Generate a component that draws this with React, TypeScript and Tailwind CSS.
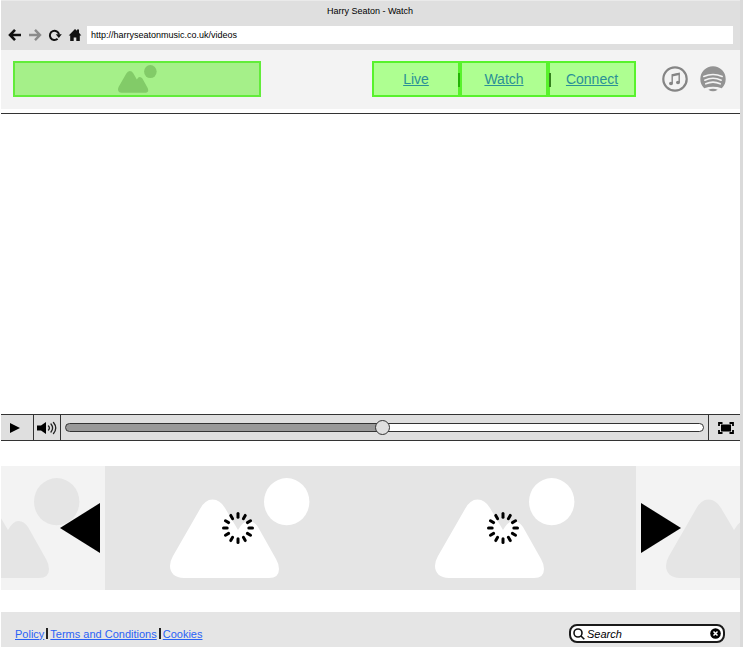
import { useState } from "react";

const navItems = ["Live", "Watch", "Connect"];
const footerItems = ["Policy", "Terms and Conditions", "Cookies"];
const spokes = [0, 30, 60, 90, 120, 150, 180, 210, 240, 270, 300, 330];

/* Placeholder artwork: two peaks and a sun */
function Picture({ className }: { className: string }) {
  return (
    <svg viewBox="0 0 143 101" className={`shrink-0 ${className}`} fill="currentColor" aria-hidden="true">
      <path d="M17 100C8 100 3 95 3 88Q3 83 6 78L33 31Q38 21.500 45.500 21.500Q53 21.500 58 30L71 52Q76 43 81.500 43Q87 43 91 49L109 81Q112 86 112 91Q112 100 102 100Z" />
      <ellipse cx="119.700" cy="23.700" rx="22.700" ry="23.600" />
    </svg>
  );
}

function Spinner() {
  return (
    <svg viewBox="-17 -17 34 34" className="absolute top-1/2 left-1/2 size-[34px] -translate-x-1/2 -translate-y-1/2" role="img" aria-label="Loading">
      {spokes.map((a) => (
        <path key={a} d="M0-10.800V-14.500" transform={`rotate(${a})`} stroke="#000" strokeWidth="3" strokeLinecap="round" />
      ))}
    </svg>
  );
}

function BrowserBar() {
  return (
    <div className="border-t border-[#eaeaea] bg-[#dfdfdf] pr-[7px] pb-1.5 pl-1.5">
      <h1 className="pt-1 text-center text-[9px] leading-3 text-black">Harry Seaton - Watch</h1>
      <div className="mt-[9px] flex items-center">
        <div className="flex w-20 items-center gap-1.5 pl-px">
          <button aria-label="Back">
            <svg viewBox="0 0 14 14" className="size-3.5" fill="none" stroke="#111" strokeWidth="2.600">
              <path d="M7 1.800L2 7l5 5.200M2 7h11" />
            </svg>
          </button>
          <button aria-label="Forward">
            <svg viewBox="0 0 14 14" className="size-3.5" fill="none" stroke="#8b8b8b" strokeWidth="2.400">
              <path d="M7 1.800l5 5.200-5 5.200M12 7H1" />
            </svg>
          </button>
          <button aria-label="Reload">
            <svg viewBox="0 0 14 14" className="size-3.5" fill="none" stroke="#111" strokeWidth="2">
              <path d="M9.600 10.800A4.600 4.600 0 1 1 11 6.500" />
              <path d="M7.800 6.300h6l-3 3.800z" fill="#111" stroke="none" />
            </svg>
          </button>
          <button aria-label="Home">
            <svg viewBox="0 0 14 14" className="size-3.5" fill="#111">
              <path d="M7 1l2 1.800V1.500h2v3.200L13.300 7.500H11.800v5.500H8.300V9.500H5.700V13H2.200V7.500H.700z" />
            </svg>
          </button>
        </div>
        <input
          aria-label="Address"
          defaultValue="http://harryseatonmusic.co.uk/videos"
          className="h-[18px] min-w-0 flex-1 bg-white px-1 text-[9px] leading-3 text-black"
        />
      </div>
    </div>
  );
}

function SiteHeader() {
  return (
    <header className="flex items-center bg-[#f3f3f3] pt-[11px] pr-[14px] pb-3 pl-3">
      <a href="#home" aria-label="Home page" className="flex h-9 w-[248px] items-center justify-center border-2 border-[#62ec3a] bg-[#a5f089]">
        <Picture className="h-7 w-10 text-[#82cb68]" />
      </a>
      <nav className="ml-auto flex">
        {navItems.map((item, i) => (
          <div key={item} className="relative flex h-9 w-[88px] items-center justify-center border-2 border-[#58f22c] bg-[#aeff91]">
            <a href={`#${item}`} className="text-[14px] leading-5 text-[#2b9096] underline">{item}</a>
            {i === 0 && <span className="absolute top-2.5 -right-0.5 h-3.5 w-0.5 bg-[#23b406]" />}
            {i === 2 && <span className="absolute top-2.5 -left-px h-3.5 w-0.5 bg-[#34801f]" />}
          </div>
        ))}
      </nav>
      <a href="#itunes" aria-label="iTunes" className="ml-[26px]">
        <svg viewBox="0 0 26 26" className="size-[26px]" fill="none" stroke="#858585">
          <circle cx="13" cy="13" r="11.700" strokeWidth="2.200" />
          <path d="M10.200 17.300V8.800l7-1.500v9" strokeWidth="1.400" />
          <path d="M10.200 9.400l7-1.500" strokeWidth="2" />
          <ellipse cx="9" cy="17.500" rx="2" ry="1.700" fill="#858585" stroke="none" />
          <ellipse cx="16" cy="16.500" rx="2" ry="1.700" fill="#858585" stroke="none" />
        </svg>
      </a>
      <a href="#spotify" aria-label="Spotify" className="ml-3">
        <svg viewBox="0 0 26 26" className="size-[26px]">
          <path d="M4.200 22.200A12.700 12.700 0 1 1 21.800 22.200Q13 19.300 4.200 22.200Z" fill="#939393" />
          <path d="M8.300 23.800Q13 21.600 17.700 23.800Q13 26.800 8.300 23.800Z" fill="#939393" />
          <path d="M3.800 10.500Q13 6.500 22.200 10.500M4.800 14.200Q13 10.400 21.200 14.200M5.800 17.800Q13 14.400 20.200 17.800" fill="none" stroke="#f3f3f3" strokeWidth="1.600" strokeLinecap="round" />
        </svg>
      </a>
    </header>
  );
}

function Player() {
  const [position, setPosition] = useState(49.7);
  return (
    <div className="flex h-[27px] items-stretch border-y border-[#333] bg-[#dfdfdf]">
      <button aria-label="Play" className="flex w-[33px] items-center justify-center border-r border-[#333] pr-1">
        <svg viewBox="0 0 10 10" className="size-2.5"><path d="M0 0L10 5L0 10z" /></svg>
      </button>
      <button aria-label="Volume" className="flex w-[27px] items-center justify-center border-r border-[#333]">
        <svg viewBox="0 0 20 14" className="h-3.5 w-5" fill="none" stroke="#222" strokeWidth="1.300" strokeLinecap="round">
          <path d="M0 4.500h4L9 1v12L4 9.500H0z" fill="#000" stroke="none" />
          <path d="M11.500 5Q13.300 7 11.500 9M14 3Q17.200 7 14 11M16.500 1.500Q21 7 16.500 12.500" />
        </svg>
      </button>
      <div className="flex flex-1 items-center px-1">
        <input
          type="range"
          aria-label="Seek"
          min="0"
          max="100"
          step="0.1"
          value={position}
          onChange={(e) => setPosition(Number(e.target.value))}
          className="h-[15px] w-full appearance-none bg-transparent [&::-webkit-slider-runnable-track]:h-[9px] [&::-webkit-slider-runnable-track]:rounded-full [&::-webkit-slider-runnable-track]:border [&::-webkit-slider-runnable-track]:border-[#333] [&::-webkit-slider-runnable-track]:bg-[linear-gradient(to_right,#999_var(--played),#fff_var(--played))] [&::-webkit-slider-thumb]:-mt-1 [&::-webkit-slider-thumb]:size-[15px] [&::-webkit-slider-thumb]:appearance-none [&::-webkit-slider-thumb]:rounded-full [&::-webkit-slider-thumb]:border [&::-webkit-slider-thumb]:border-[#333] [&::-webkit-slider-thumb]:bg-[#dfdfdf]"
          style={{ "--played": `${position}%` } as React.CSSProperties}
        />
      </div>
      <button aria-label="Full screen" className="flex w-8 items-center justify-center border-l border-[#333] pl-0.5">
        <svg viewBox="0 0 16 12" className="h-3 w-4">
          <rect x="3" y="2.500" width="10" height="7" />
          <path d="M1 4V1H4.500M11.500 1H15V4M15 8v3H11.500M4.500 11H1V8" fill="none" stroke="#000" strokeWidth="1.800" />
        </svg>
      </button>
    </div>
  );
}

function Carousel() {
  return (
    <section aria-label="Videos" className="mt-[25px] mb-[22px] flex h-[124px]">
      <div className="relative flex w-[104px] items-center justify-end overflow-hidden bg-[#f3f3f3] pr-[25px]">
        <Picture className="h-[101px] w-[143px] text-[#e5e5e5]" />
        <button aria-label="Previous" className="absolute top-1/2 right-[5px] -translate-y-1/2">
          <svg viewBox="0 0 40 50" className="h-[50px] w-10"><path d="M40 0V50L0 25z" /></svg>
        </button>
      </div>
      {["first", "second"].map((slot) => (
        <div key={slot} className="relative flex flex-1 items-center justify-center overflow-hidden bg-[#e5e5e5] pl-px">
          <Picture className="h-[101px] w-[143px] text-white" />
          <Spinner />
        </div>
      ))}
      <div className="relative flex w-[104px] items-center overflow-hidden bg-[#f3f3f3] pl-[27px]">
        <Picture className="h-[101px] w-[143px] text-[#e5e5e5]" />
        <button aria-label="Next" className="absolute top-1/2 left-[5px] -translate-y-1/2">
          <svg viewBox="0 0 40 50" className="h-[50px] w-10"><path d="M0 0V50L40 25z" /></svg>
        </button>
      </div>
    </section>
  );
}

function Footer() {
  return (
    <footer className="flex h-[35px] items-center justify-between bg-[#e5e5e5] pt-2 pr-[15px] pl-[14px]">
      <nav className="flex items-center gap-0.5 text-[11px] leading-4">
        {footerItems.map((item, i) => (
          <div key={item} className="flex items-center gap-0.5">
            {i > 0 && <span className="h-[11px] w-0.5 bg-[#222]" />}
            <a href={`#${item}`} className="text-[#2a62f5] underline">{item}</a>
          </div>
        ))}
      </nav>
      <label className="flex h-[19px] w-[156px] items-center rounded-lg border-2 border-[#1a1a1a] bg-white px-0.5">
        <svg viewBox="0 0 12 12" className="size-3 shrink-0" fill="none" stroke="#111" strokeWidth="1.600">
          <circle cx="5" cy="5" r="4" /><path d="M8 8l3.300 3.300" />
        </svg>
        <input type="text" aria-label="Search" placeholder="Search" className="min-w-0 flex-1 px-0.5 text-[11px] leading-4 italic outline-none placeholder:text-black" />
        <button aria-label="Clear">
          <svg viewBox="0 0 11 11" className="size-[11px]">
            <circle cx="5.500" cy="5.500" r="5.300" />
            <path d="M3.500 3.500l4 4M7.500 3.500l-4 4" stroke="#fff" strokeWidth="1.500" />
          </svg>
        </button>
      </label>
    </footer>
  );
}

export default function App() {
  return (
    <div className="min-h-screen bg-white pr-px pb-px pl-px font-['Liberation_Sans',Arial,sans-serif]">
      <div className="flex min-h-[calc(100vh-1px)] flex-col border-r-3 border-[#dadada]">
        <BrowserBar />
        <SiteHeader />
        <main className="flex flex-1 flex-col">
          <div className="mt-1 min-h-60 flex-1 border-t border-[#333]" />
          <Player />
          <Carousel />
        </main>
        <Footer />
      </div>
    </div>
  );
}
